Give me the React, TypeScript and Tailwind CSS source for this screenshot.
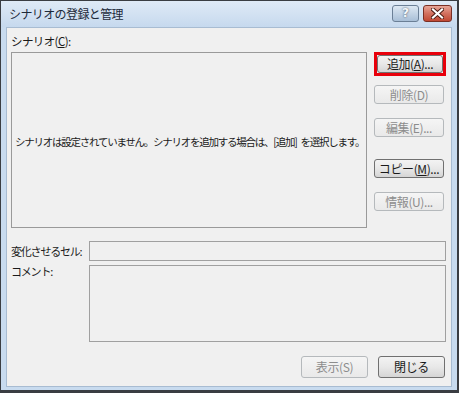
const font = { fontFamily: '"Noto Sans CJK JP", "Liberation Sans", sans-serif' };

function Btn({
  children,
  disabled,
  highlight,
  className = "",
}: {
  children: React.ReactNode;
  disabled?: boolean;
  highlight?: boolean;
  className?: string;
}) {
  const base = disabled
    ? "border-[#b5b9bc] bg-gradient-to-b from-[#f5f5f5] to-[#e9e9e9] text-[#8d8d8d]"
    : "border-[#707070] bg-gradient-to-b from-[#f3f3f3] via-[#e8e8e8] to-[#d5d5d5] text-[#1a1a1a]";
  const btn = (
    <div
      className={`flex items-center justify-center rounded-[3px] border text-[12px] tracking-[-0.4px] ${base} ${className}`}
    >
      {children}
    </div>
  );
  if (highlight) {
    return <div className="border-[3px] border-[#e8000b] p-0">{btn}</div>;
  }
  return btn;
}

export default function App() {
  return (
    <div
      style={font}
      className="w-[459px] h-[393px] flex flex-col bg-[#c8dbef] border-l border-t border-r-2 border-b-[3px] border-[#3a3d42]"
    >
      {/* title bar */}
      <div className="h-[26px] flex items-center justify-between pl-[8px] pr-[5px] bg-gradient-to-b from-[#dfeaf6] to-[#c6d9ee]">
        <span className="text-[12px] tracking-[-0.6px] text-[#1d2a3a]">シナリオの登録と管理</span>
        <div className="flex gap-[4px] -mt-[2px]">
          <div className="w-[27px] h-[17px] rounded-[3px] border border-[#6b7f96] bg-gradient-to-b from-[#dde8f3] to-[#a9bfd7] flex items-center justify-center">
            <span className="text-[12px] font-bold leading-none text-[#f4f7fb] [text-shadow:0_0_2px_#2c3b4e]" style={{ fontFamily: '"DejaVu Sans", sans-serif' }}>?</span>
          </div>
          <div className="w-[29px] h-[17px] rounded-[3px] border border-[#7a2f24] bg-gradient-to-b from-[#e7a597] via-[#d2705f] to-[#c04833] flex items-center justify-center">
            <svg width="13" height="11" viewBox="0 0 13 11">
              <path d="M2 1.5 L11 9.5 M11 1.5 L2 9.5" stroke="#4a1a12" strokeWidth="4" strokeLinecap="square" />
              <path d="M2 1.5 L11 9.5 M11 1.5 L2 9.5" stroke="#ffffff" strokeWidth="2.2" strokeLinecap="square" />
            </svg>
          </div>
        </div>
      </div>

      {/* client area */}
      <div className="flex-1 mx-[5px] mb-[3px] border border-[#a8bcd2] bg-[#f0f0f0] flex flex-col pl-[4px] pr-[5px] text-[11.5px] text-[#1a1a1a]">
        <div className="h-[24px] flex items-end pb-[2px] tracking-[-0.6px]">
          シナリオ(<span className="underline">C</span>):
        </div>

        <div className="flex">
          <div className="w-[357px] h-[176px] border border-[#9a9a9a] bg-[#f0f0f0] flex items-center pl-[3px] pt-[4px]">
            <span className="text-[10.5px] tracking-[-1.25px] whitespace-nowrap">
              シナリオは設定されていません。シナリオを追加する場合は、[追加]<span className="ml-[4px]">を選択します。</span>
            </span>
          </div>
          <div className="ml-[7px] flex flex-col">
            <Btn highlight className="w-[66px] h-[18px]">
              追加(<span className="underline">A</span>)...
            </Btn>
            <Btn disabled className="w-[70px] h-[19px] mt-[9px]">削除(D)</Btn>
            <Btn disabled className="w-[70px] h-[19px] mt-[14px]">編集(E)...</Btn>
            <Btn className="w-[70px] h-[19px] mt-[22px]">
              コピー(<span className="underline">M</span>)...
            </Btn>
            <Btn disabled className="w-[70px] h-[19px] mt-[14px]">情報(U)...</Btn>
          </div>
        </div>

        <div className="flex items-center mt-[13px]">
          <span className="w-[78px] text-[11px] tracking-[-1.2px]">変化させるセル:</span>
          <div className="w-[359px] h-[20px] border border-[#a0a0a0] bg-[#f0f0f0]" />
        </div>

        <div className="flex mt-[4px]">
          <span className="w-[78px] text-[11px] tracking-[-1.2px] -mt-[2px]">コメント:</span>
          <div className="w-[359px] h-[77px] border border-[#a0a0a0] bg-[#f0f0f0]" />
        </div>

        <div className="flex justify-end gap-[10px] mt-[14px] pr-[1px]">
          <Btn disabled className="w-[67px] h-[22px]">表示(S)</Btn>
          <Btn className="w-[67px] h-[22px]">閉じる</Btn>
        </div>
      </div>
    </div>
  );
}
